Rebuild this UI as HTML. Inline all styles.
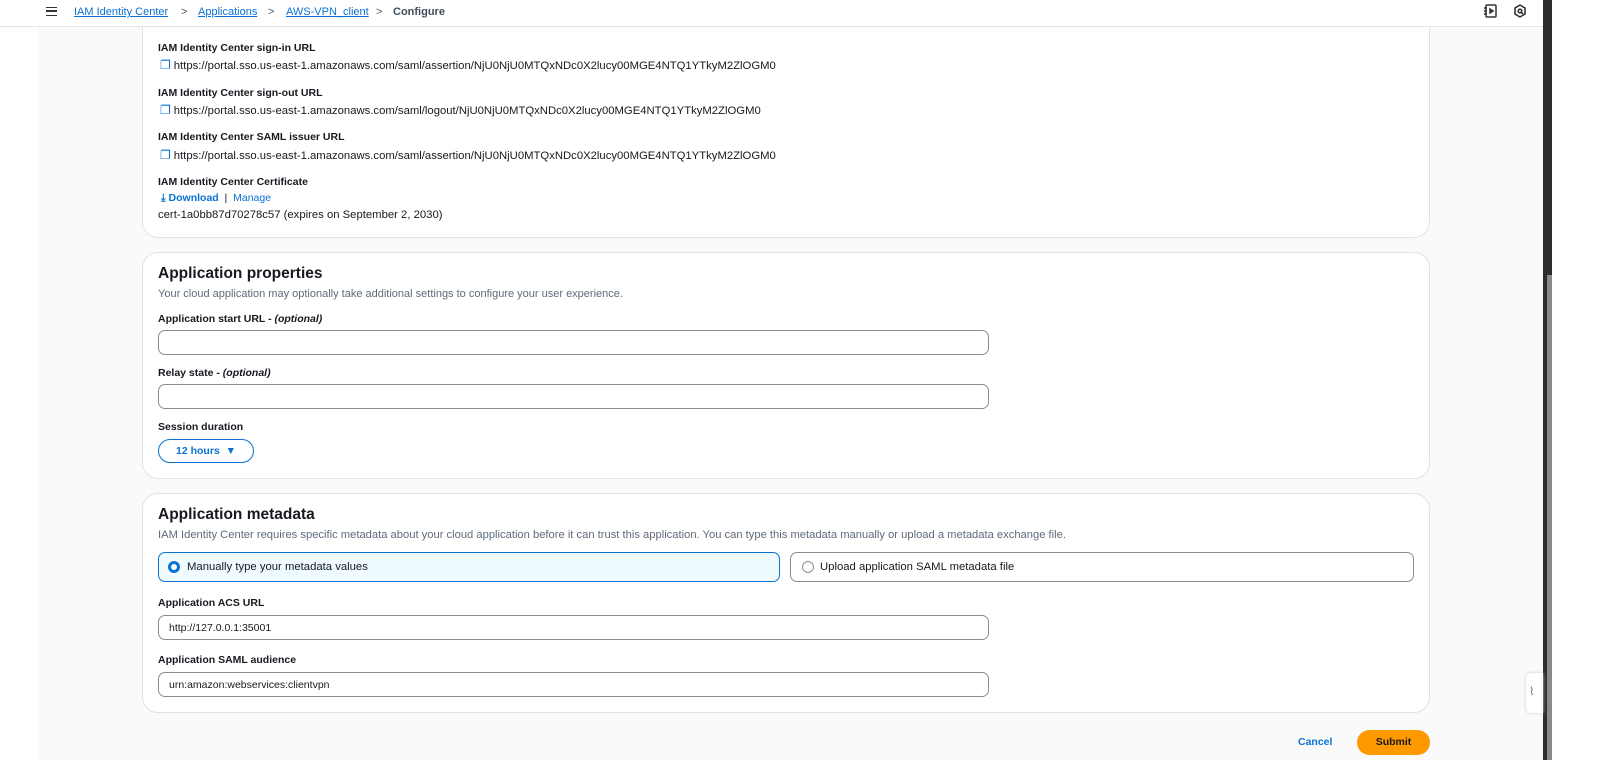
<!DOCTYPE html>
<html><head><meta charset="utf-8"><style>
*{box-sizing:border-box;margin:0;padding:0}
body{width:1597px;height:760px;overflow:hidden;background:#fff;font-family:"Liberation Sans",sans-serif;color:#16191f;position:relative}
.abs{position:absolute}
.main{left:38px;top:0;width:1505px;height:760px;background:#fafafa}
.hdr{left:0;top:0;width:1543px;height:27px;background:#fff;border-bottom:1px solid #e4e4e4}
.bar{left:1543px;top:0;width:9px;height:760px;background:#2d2d2d}
.thumb{left:1547px;top:275px;width:5px;height:485px;background:#8a8a8a}
.card{position:absolute;left:142px;width:1288px;background:#fff;border:1px solid #e2e2e2;border-radius:16px}
.lbl{position:absolute;font-size:10.5px;font-weight:bold;color:#16191f}
.txt{position:absolute;font-size:10.5px;color:#16191f}
.url{position:absolute;font-size:11.3px;color:#16191f}
.url .ic{color:#0972d3;font-size:12px;margin-right:3px}
.h2{position:absolute;font-size:15.5px;font-weight:bold;color:#16191f}
.desc{position:absolute;font-size:11px;color:#5f6b7a}
.inp{position:absolute;left:158px;width:831px;height:25px;border:1px solid #8c8c94;border-radius:7px;background:#fff;font-size:10.5px;padding:6px 10px;color:#16191f}
a{color:#0972d3}
.crumb{position:absolute;top:6px;font-size:11px}
</style></head><body>
<div class="abs main"></div>
<div class="card" style="top:18px;height:220px;border-top:none;border-radius:0 0 16px 16px"></div>
<div class="abs hdr"></div>
<div class="abs" style="left:46px;top:7px;width:11px;height:9px;border-top:1.6px solid #333;border-bottom:1.6px solid #333"><div style="margin-top:2.2px;height:1.6px;background:#333"></div></div>
<div class="crumb" style="left:74px"><a style="text-decoration:underline">IAM Identity Center</a></div>
<div class="crumb" style="left:181px;color:#555">&gt;</div>
<div class="crumb" style="left:198px"><a style="text-decoration:underline">Applications</a></div>
<div class="crumb" style="left:268px;color:#555">&gt;</div>
<div class="crumb" style="left:286px"><a style="text-decoration:underline">AWS-VPN_client</a></div>
<div class="crumb" style="left:376px;color:#555">&gt;</div>
<div class="crumb" style="left:393px;color:#414d5c;font-weight:bold">Configure</div>
<svg class="abs" style="left:1482px;top:3px" width="16" height="16" viewBox="0 0 16 16" fill="none" stroke="#333" stroke-width="1.5"><rect x="4" y="2" width="10" height="12" rx="1"/><path d="M2 5h3M2 8h3M2 11h3"/><path d="M8 6l3 2-3 2z" fill="#333"/></svg>
<svg class="abs" style="left:1512px;top:3px" width="16" height="16" viewBox="0 0 16 16" fill="none" stroke="#333" stroke-width="1.6"><path d="M8 2l5 3v6l-5 3-5-3V5z"/><circle cx="8" cy="8" r="1.8"/><path d="M9 9l2 2"/></svg>
<div class="abs bar"></div><div class="abs thumb"></div>

<div class="lbl" style="left:158px;top:42px">IAM Identity Center sign-in URL</div>
<div class="url" style="left:160px;top:58px"><span class="ic">❐</span>https://portal.sso.us-east-1.amazonaws.com/saml/assertion/NjU0NjU0MTQxNDc0X2lucy00MGE4NTQ1YTkyM2ZlOGM0</div>
<div class="lbl" style="left:158px;top:87px">IAM Identity Center sign-out URL</div>
<div class="url" style="left:160px;top:103px"><span class="ic">❐</span>https://portal.sso.us-east-1.amazonaws.com/saml/logout/NjU0NjU0MTQxNDc0X2lucy00MGE4NTQ1YTkyM2ZlOGM0</div>
<div class="lbl" style="left:158px;top:131px">IAM Identity Center SAML issuer URL</div>
<div class="url" style="left:160px;top:148px"><span class="ic">❐</span>https://portal.sso.us-east-1.amazonaws.com/saml/assertion/NjU0NjU0MTQxNDc0X2lucy00MGE4NTQ1YTkyM2ZlOGM0</div>
<div class="lbl" style="left:158px;top:176px">IAM Identity Center Certificate</div>
<div class="txt" style="left:161px;top:192px;font-weight:bold;color:#0972d3">⤓ Download <span style="color:#16191f;font-weight:normal">&nbsp;|&nbsp;</span> <span style="font-weight:normal">Manage</span></div>
<div class="url" style="left:158px;top:209px">cert-1a0bb87d70278c57 (expires on September 2, 2030)</div>

<div class="card" style="top:252px;height:227px"></div>
<div class="h2" style="left:158px;top:265px">Application properties</div>
<div class="desc" style="left:158px;top:288px">Your cloud application may optionally take additional settings to configure your user experience.</div>
<div class="lbl" style="left:158px;top:313px">Application start URL - <i>(optional)</i></div>
<div class="inp" style="top:330px"></div>
<div class="lbl" style="left:158px;top:367px">Relay state - <i>(optional)</i></div>
<div class="inp" style="top:384px"></div>
<div class="lbl" style="left:158px;top:421px">Session duration</div>
<div class="abs" style="left:158px;top:439px;width:96px;height:24px;border:1.5px solid #0972d3;border-radius:12px;color:#0972d3;font-size:10.5px;font-weight:bold;padding:5px 0 0 17px">12 hours &nbsp;▼</div>

<div class="card" style="top:493px;height:220px"></div>
<div class="h2" style="left:158px;top:506px">Application metadata</div>
<div class="desc" style="left:158px;top:529px;font-size:11.2px">IAM Identity Center requires specific metadata about your cloud application before it can trust this application. You can type this metadata manually or upload a metadata exchange file.</div>
<div class="abs" style="left:158px;top:552px;width:622px;height:30px;border:1.5px solid #0972d3;border-radius:7px;background:#f0fbff"></div>
<div class="abs" style="left:168px;top:561px;width:12px;height:12px;border:3.5px solid #0972d3;border-radius:50%;background:#fff"></div>
<div class="url" style="left:187px;top:561px">Manually type your metadata values</div>
<div class="abs" style="left:790px;top:552px;width:624px;height:30px;border:1px solid #8c8c94;border-radius:7px;background:#fff"></div>
<div class="abs" style="left:802px;top:561px;width:12px;height:12px;border:1px solid #8c8c94;border-radius:50%"></div>
<div class="url" style="left:820px;top:561px">Upload application SAML metadata file</div>
<div class="lbl" style="left:158px;top:597px">Application ACS URL</div>
<div class="inp" style="top:615px">http://127.0.0.1:35001</div>
<div class="lbl" style="left:158px;top:654px">Application SAML audience</div>
<div class="inp" style="top:672px">urn:amazon:webservices:clientvpn</div>

<div class="abs" style="left:1298px;top:736px;font-size:10.5px;font-weight:bold;color:#0972d3">Cancel</div>
<div class="abs" style="left:1357px;top:730px;width:73px;height:25px;border-radius:13px;background:#ff9900;font-size:10.5px;font-weight:bold;text-align:center;padding-top:6px">Submit</div>
<div class="abs" style="left:1526px;top:673px;width:17px;height:40px;background:#fff;border-radius:5px 0 0 5px;box-shadow:0 0 3px #ccc;font-size:11px;color:#666;padding:12px 0 0 3px">⌇</div>
</body></html>
